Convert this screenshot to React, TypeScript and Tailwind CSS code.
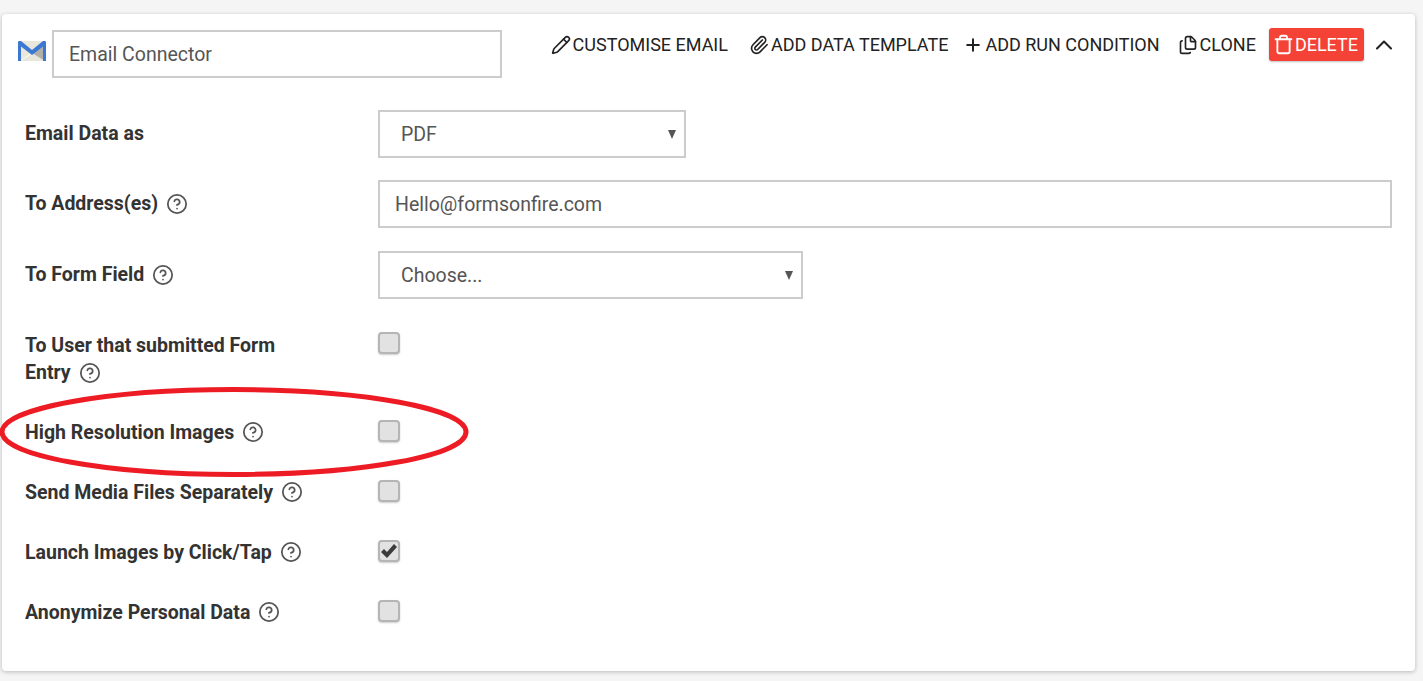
import React from 'react';
import { ChevronUp, CircleHelp, Files, Paperclip, Pencil, Plus, Trash } from 'lucide-react';

function GmailIcon() {
  return (
    <svg width="30" height="22" viewBox="0 0 30 22" className="shrink-0">
      <path d="M1 1h28v20H1z" fill="#e9e7dc" />
      <path d="M29 3v18h-1L15 13z" fill="#b0b0a6" />
      <path d="M2 21l13-9 2 1L4 21z" fill="#f4f3ec" />
      <path d="M1 21V2.500C1 1.500 1.600 1 2.500 1H4l11 9 11-9h1.500c.9 0 1.500.5 1.500 1.500V21h-3V6.500L15 15 4 6.500V21z" fill="#3b78d4" />
    </svg>
  );
}

function Help() {
  return <CircleHelp size={22} strokeWidth={1.9} className="shrink-0 text-[#555]" />;
}

function HeaderAction({ icon, label }: { icon: React.ReactNode; label: string }) {
  return (
    <span className="flex items-center gap-[2px] text-[18px] leading-[24px] text-[#222]">
      {icon}
      {label}
    </span>
  );
}

function Select({ value, width }: { value: string; width: string }) {
  return (
    <div className={`flex h-12 items-center justify-between border-2 border-[#ccc] pl-[21px] pr-[8px] text-[19.5px] text-[#555] ${width}`}>
      <span className="pt-[2px]">{value}</span>
      <span className="h-0 w-0 border-x-[4.5px] border-t-[9px] border-x-transparent border-t-[#555]" />
    </div>
  );
}

function Checkbox({ checked = false }: { checked?: boolean }) {
  return (
    <div className="flex h-[22px] w-[22px] items-center justify-center rounded-[4px] border-2 border-[#b5b5b5] bg-[#e2e2e2] shadow-[0_1px_2px_rgba(0,0,0,0.2)]">
      {checked && (
        <svg width="18" height="16" viewBox="0 0 18 16" className="shrink-0">
          <path d="M1 9l3-3 3 3 7-8 3 3L7 15z" fill="#3c3c3c" />
        </svg>
      )}
    </div>
  );
}

function CheckRow({ label, checked }: { label: string; checked?: boolean }) {
  return (
    <div className="flex h-[60px] items-start">
      <div className="flex h-6 w-[353px] items-center gap-[8px] text-[19.5px] leading-[24px] font-bold text-[#333]">
        <span className="pt-[1px]">{label}</span>
        <Help />
      </div>
      <Checkbox checked={checked} />
    </div>
  );
}

export default function App() {
  return (
    <div className="relative h-[681px] overflow-hidden bg-[#f5f5f5] pt-[14px] pl-[2px] font-['Roboto',sans-serif]">
      <div className="h-[657px] w-[1413px] rounded-[4px] bg-white pt-4 shadow-[0_1px_4px_rgba(0,0,0,0.25)]">
        <div className="flex h-12 items-start pl-[15px] pr-[17px]">
          <div className="flex h-12 items-center pb-[7px]">
            <GmailIcon />
          </div>
          <div className="ml-[5px] flex h-12 w-[450px] items-center border-2 border-[#ccc] pl-[15px] pt-[2px] text-[19.5px] text-[#555]">
            Email Connector
          </div>
          <div className="-mt-[2px] ml-auto flex h-[33px] items-center">
            <HeaderAction icon={<Pencil size={20} strokeWidth={2} />} label="CUSTOMISE EMAIL" />
            <span className="ml-[21px]">
              <HeaderAction icon={<Paperclip size={20} strokeWidth={2} />} label="ADD DATA TEMPLATE" />
            </span>
            <span className="ml-[15px]">
              <HeaderAction icon={<Plus size={20} strokeWidth={2.400} />} label="ADD RUN CONDITION" />
            </span>
            <span className="ml-[18px]">
              <HeaderAction icon={<Files size={20} strokeWidth={2} />} label="CLONE" />
            </span>
            <button className="ml-[13px] flex h-[33px] items-center gap-[1px] rounded-[3px] bg-[#f44336] pl-[4px] pr-[6px] text-[18px] text-white shadow-[0_1px_2px_rgba(0,0,0,0.25)]">
              <Trash size={21} strokeWidth={2.100} />
              DELETE
            </button>
            <ChevronUp size={28} strokeWidth={1.800} className="ml-[6px] text-[#222]" />
          </div>
        </div>

        <div className="flex flex-col pt-[32px] pl-[23px] pr-[23px]">
          <div className="flex items-center">
            <div className="w-[353px] text-[19.5px] font-bold text-[#333]">Email Data as</div>
            <Select value="PDF" width="w-[308px]" />
          </div>
          <div className="mt-[22px] flex items-center">
            <div className="flex w-[353px] items-center gap-[8px] text-[19.5px] font-bold text-[#333]">
              To Address(es)
              <Help />
            </div>
            <div className="flex h-12 flex-1 items-center border-2 border-[#ccc] pl-[15px] pt-[2px] text-[19.5px] text-[#555]">
              Hello@formsonfire.com
            </div>
          </div>
          <div className="mt-[23px] flex items-center">
            <div className="flex w-[353px] items-center gap-[8px] text-[19.5px] font-bold text-[#333]">
              To Form Field
              <Help />
            </div>
            <Select value="Choose..." width="w-[425px]" />
          </div>
          <div className="mt-[33px] flex h-[88px] items-start">
            <div className="w-[353px] text-[19.5px] leading-[27px] font-bold text-[#333]">
              To User that submitted Form
              <br />
              <span className="inline-flex items-center gap-[8px]">
                Entry
                <Help />
              </span>
            </div>
            <Checkbox />
          </div>
          <CheckRow label="High Resolution Images" />
          <CheckRow label="Send Media Files Separately" />
          <CheckRow label="Launch Images by Click/Tap" checked />
          <CheckRow label="Anonymize Personal Data" />
        </div>
      </div>
      <svg width="472" height="94" viewBox="0 0 472 94" className="pointer-events-none absolute top-[386px] left-0">
        <ellipse cx="234" cy="46" rx="232" ry="42.500" fill="none" stroke="#ed1c24" strokeWidth="5" />
      </svg>
    </div>
  );
}
